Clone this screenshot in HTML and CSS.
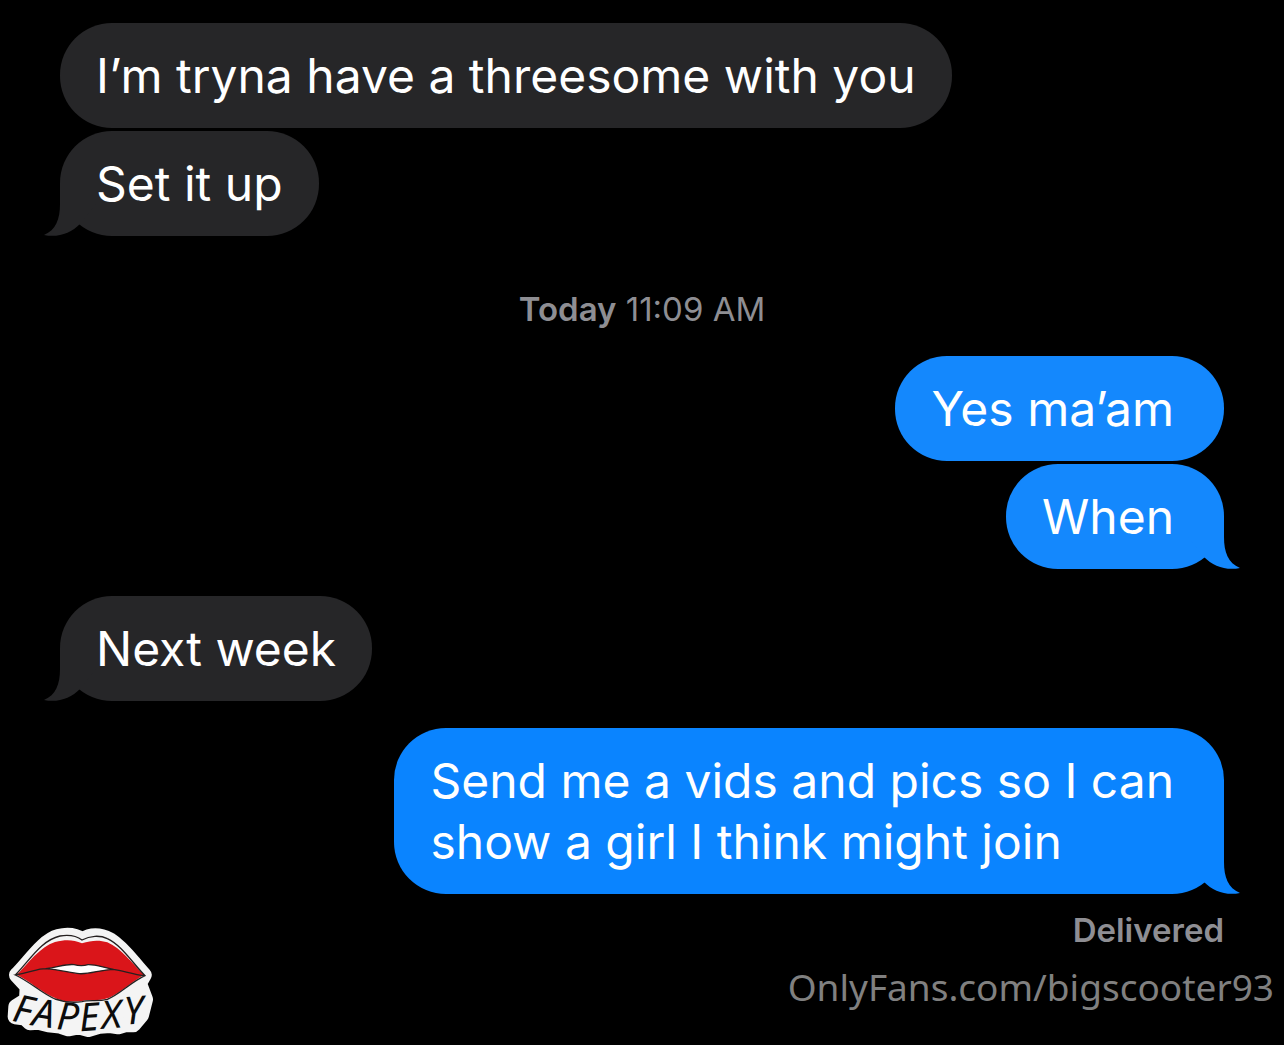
FILE: index.html
```html
<!DOCTYPE html>
<html lang="en">
<head>
<meta charset="utf-8">
<meta name="viewport" content="width=device-width, initial-scale=1">
<title>Messages</title>
<link rel="stylesheet" href="styles.css">
</head>
<body>
<svg class="defs" aria-hidden="true">
  <symbol id="tail" viewBox="0 0 52 52">
    <path d="M16 0V20C16 35 12 46 0 51C14 54 27 49 36 40L52 20V0Z"/>
  </symbol>
</svg>
<main class="chat">
  <section class="group received">
    <p class="bubble">I’m tryna have a threesome with you</p>
    <p class="bubble">Set it up<svg class="tail" aria-hidden="true"><use href="#tail"/></svg></p>
  </section>
  <p class="stamp"><strong>Today</strong> <time>11:09 AM</time></p>
  <section class="group sent">
    <p class="bubble light">Yes ma’am</p>
    <p class="bubble light">When<svg class="tail" aria-hidden="true"><use href="#tail"/></svg></p>
  </section>
  <section class="group received">
    <p class="bubble">Next week<svg class="tail" aria-hidden="true"><use href="#tail"/></svg></p>
  </section>
  <section class="group sent">
    <p class="bubble">Send me a vids and pics so I can<br>show a girl I think might join<svg class="tail" aria-hidden="true"><use href="#tail"/></svg></p>
  </section>
  <p class="status">Delivered</p>
</main>
<footer class="credit">OnlyFans.com/bigscooter93</footer>
<svg class="sticker" viewBox="0 0 495 375" role="img" aria-label="Fapexy">
  <path class="backing" d="M50 165C90 125 130 62 175 50C205 42 225 45 247 60C275 42 305 47 330 60C370 85 395 125 432 165L418 190L436 238L424 285L400 314L375 314L355 320L330 316L300 318L265 328L235 320L205 326L180 318L145 314L115 306L90 308L75 294L46 290L48 260L80 240L82 200Z"/>
  <path class="lips" d="M50 164C85 130 120 80 165 66C200 58 220 60 246 70C275 60 300 60 322 67C365 85 395 130 432 164C390 190 360 218 325 234C295 245 270 236 246 243C215 246 195 246 170 236C125 218 92 185 50 164Z"/>
  <path class="teeth" d="M137 146C175 141 200 131 222 134C238 138 250 138 264 134C288 133 310 143 341 148C300 149 272 163 238 161C208 158 180 149 137 146Z"/>
  <path class="line" d="M46 165C90 120 123 61 180 48C210 43 230 48 246 60C270 47 300 45 322 56C365 76 395 126 435 167C390 188 360 223 322 238C292 246 270 238 246 245C215 249 190 246 165 237C125 220 90 185 46 165C95 156 112 146 137 146C180 149 208 158 238 161C272 163 300 149 341 148C370 152 400 164 435 167M137 146C175 141 200 131 222 134C238 138 250 138 264 134C288 133 310 143 341 148"/>
  <text class="brand" x="34 94 168 240 306 374" y="302 316 328 334 326 314" rotate="12 8 4 -4 -4 -4">FAPEXY</text>
</svg>
</body>
</html>
```
FILE: styles.css
```css
* {
  box-sizing: border-box;
}

body {
  position: relative;
  min-height: 100vh;
  margin: 0;
  background: #000;
  color: #fff;
  font-family: Inter, "Liberation Sans", sans-serif;
}

p {
  margin: 0;
}

.defs {
  position: absolute;
  width: 0;
  height: 0;
}

.chat {
  display: flex;
  flex-direction: column;
  gap: 27px;
  padding: 23px 60px 0;
}

.group {
  display: flex;
  flex-direction: column;
  gap: 3px;
}

.received {
  --fill: #262628;
  align-items: flex-start;
}

.sent {
  --fill: #0a84ff;
  align-items: flex-end;
}

.bubble {
  position: relative;
  padding: 22px 36px;
  border-radius: 52px;
  background: var(--fill);
  font-size: 48px;
  line-height: 61px;
}

.sent .bubble {
  padding-right: 50px;
}

.light {
  --fill: #1488fd;
}

.tail {
  position: absolute;
  bottom: 0;
  left: -16px;
  width: 52px;
  height: 52px;
  fill: var(--fill);
}

.sent .tail {
  right: -16px;
  left: auto;
  transform: scaleX(-1);
}

.stamp {
  padding: 30px 0 3px;
  color: #8e8e93;
  font-size: 33px;
  line-height: 33px;
  text-align: center;
}

.stamp strong,
.status {
  font-weight: 600;
}

.status {
  margin-top: -8px;
  color: #8e8e93;
  font-size: 33px;
  line-height: 34px;
  text-align: right;
}

.credit {
  padding: 13px 10px 0;
  color: #808080;
  font-family: "Noto Sans", "Open Sans", sans-serif;
  font-size: 37px;
  line-height: 54px;
  text-align: right;
}

.sticker {
  position: absolute;
  bottom: 0;
  left: 0;
  width: 165px;
  height: 125px;
}

.backing {
  fill: #f4f4f4;
  stroke: #f4f4f4;
  stroke-width: 46;
  stroke-linejoin: round;
}

.lips {
  fill: #da151a;
}

.teeth {
  fill: #fff;
}

.line {
  fill: none;
  stroke: #252020;
  stroke-width: 4;
}

.brand {
  fill: #0c0c0c;
  font-family: "Noto Sans", "Open Sans", sans-serif;
  font-size: 116px;
  font-style: italic;
}
```
